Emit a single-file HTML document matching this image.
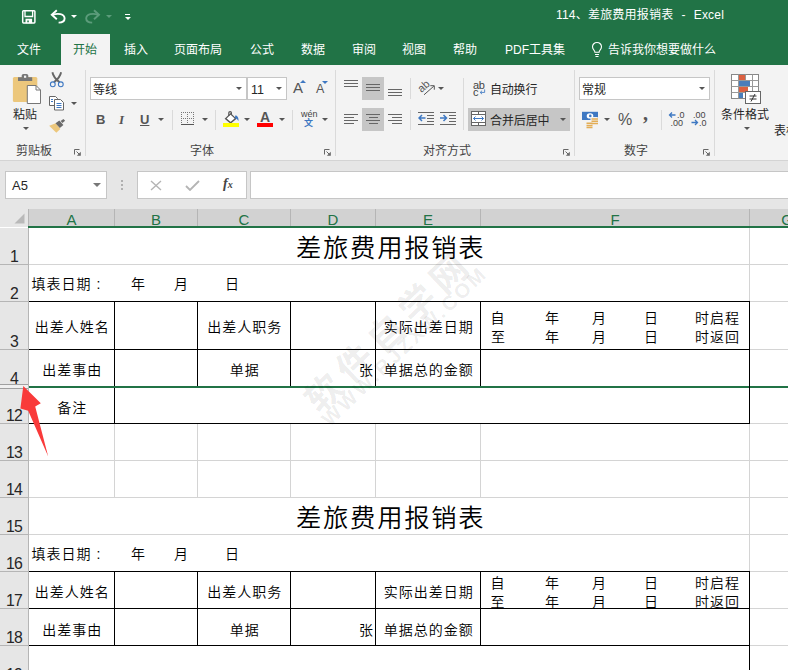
<!DOCTYPE html>
<html lang="zh-CN">
<head>
<meta charset="utf-8">
<title>114、差旅费用报销表 - Excel</title>
<style>
html,body{margin:0;padding:0;}
body{width:788px;height:670px;overflow:hidden;position:relative;background:#fff;
  font-family:"Liberation Sans","Noto Sans CJK SC",sans-serif;color:#262626;}
.abs,#app *{position:absolute;box-sizing:border-box;}
#app{position:absolute;left:0;top:0;width:788px;height:670px;overflow:hidden;}
.t{white-space:nowrap;line-height:1;}
/* title + tabs */
#titlebar{left:0;top:0;width:788px;height:65px;background:#217346;}
.tab{color:#fff;font-size:12px;top:44px;}
#tabactive{left:61px;top:34px;width:49px;height:32px;background:#f3f3f3;}
/* ribbon */
#ribbon{left:0;top:65px;width:788px;height:96px;background:#f3f3f3;border-bottom:1px solid #d4d4d4;}
.rl{font-size:12px;color:#444;top:145px;}
.rt{font-size:12px;color:#262626;}
.vsep{width:1px;background:#dadada;}
.box{background:#fff;border:1px solid #c6c6c6;}
.dd{width:0;height:0;border-left:3px solid transparent;border-right:3px solid transparent;border-top:3px solid #555;}
.sel{background:#c6c6c6;}
/* formula area */
#fbar{left:0;top:161px;width:788px;height:49px;background:#e6e6e6;}
/* grid */
#grid{left:0;top:209px;width:788px;height:461px;background:#fff;}
.ch{top:209px;height:17px;background:#d2d2d2;border-right:1px solid #b5b5b5;color:#217346;font-size:15px;text-align:center;line-height:21px;overflow:hidden}
.rh{left:0;width:29px;background:#e6e6e6;border-bottom:1px solid #b5b5b5;border-right:1px solid #b5b5b5;color:#262626;font-size:15.800px;letter-spacing:-0.750px}
.rh span{left:0;width:28px;text-align:center;bottom:-1px;line-height:16px;}
.gv{width:1px;background:#d4d4d4;}
.gh{height:1px;background:#d4d4d4;}
.bk{background:#000;}
.c{font-size:14px;color:#000;white-space:nowrap;line-height:16px;letter-spacing:1px;font-weight:350}
.cc{text-align:center;padding-left:1.500px;}
.title{font-size:25.300px;color:#000;line-height:30px;white-space:nowrap;letter-spacing:1.750px;font-weight:350}
.wm{color:rgba(0,0,0,0.085);font-weight:bold;white-space:nowrap;transform-origin:0 0;}
</style>
</head>
<body>
<div id="app">
<!-- ===== TITLE BAR ===== -->
<div id="titlebar"></div>
<div style="left:0;top:65px;width:788px;height:1px;background:#8ab39c"></div>
<div id="tabactive"></div>

<!-- QAT icons -->
<svg style="left:20px;top:8px" width="18" height="18" viewBox="20 8 18 18"><rect x="22.700" y="10.700" width="12.200" height="12.200" rx="0.800" fill="none" stroke="#fff" stroke-width="1.500"/><path d="M25 10.500v6h7.600v-6" fill="none" stroke="#fff" stroke-width="1.300"/><path d="M25.500 18.800h6.600v4.500h-6.600z M27.300 20.500v3h1.500v-3z" fill="#fff" fill-rule="evenodd"/></svg>
<svg style="left:48px;top:6px" width="20" height="20" viewBox="48 6 20 20"><path d="M56.800 10.200L51.800 14.800L56.800 19.200" fill="none" stroke="#fff" stroke-width="1.900"/><path d="M52.500 14.800C55 14 58 13.600 60.500 14.200C63 14.800 64.600 16.500 64.600 18.500C64.600 21 62.500 22.500 58.600 22.600" fill="none" stroke="#fff" stroke-width="1.900"/></svg>
<div class="dd" style="left:71px;top:15px;border-top-color:#fff"></div>
<svg style="left:83px;top:6px" width="20" height="20" viewBox="83 6 20 20"><path d="M94 10.200L99 14.800L94 19.200" fill="none" stroke="#5c9c7b" stroke-width="1.900"/><path d="M98.300 14.800C95.800 14 92.800 13.600 90.300 14.200C87.800 14.800 86.200 16.500 86.200 18.500C86.200 21 88.300 22.500 92.200 22.600" fill="none" stroke="#5c9c7b" stroke-width="1.900"/></svg>
<div class="dd" style="left:106px;top:15px;border-top-color:#5c9c7b"></div>
<div style="left:125px;top:14px;width:5px;height:1px;background:#fff"></div>
<div class="dd" style="left:124.500px;top:16.500px;border-top-color:#fff"></div>
<div class="t" style="left:556px;top:9px;font-size:12px;color:#fff;letter-spacing:0.2px">114、差旅费用报销表&nbsp; <span style="position:static;margin-left:1px">-</span>&nbsp; <span style="position:static;margin-left:1px">Excel</span></div>
<!-- tabs -->
<div class="t tab" style="left:17px">文件</div>
<div class="t tab" style="left:73px;color:#217346">开始</div>
<div class="t tab" style="left:124px">插入</div>
<div class="t tab" style="left:174px">页面布局</div>
<div class="t tab" style="left:250px">公式</div>
<div class="t tab" style="left:301px">数据</div>
<div class="t tab" style="left:352px">审阅</div>
<div class="t tab" style="left:402px">视图</div>
<div class="t tab" style="left:453px">帮助</div>
<div class="t tab" style="left:505px">PDF工具集</div>
<svg style="left:590px;top:41px" width="14" height="17" viewBox="0 0 14 17"><path d="M7 1.500c-2.600 0-4.500 1.900-4.500 4.300c0 1.600 0.800 2.600 1.600 3.500c0.500 0.600 0.800 1.200 0.800 2h4.200c0-0.800 0.300-1.400 0.800-2c0.800-0.900 1.600-1.900 1.600-3.500c0-2.400-1.900-4.300-4.500-4.300z M5 13.500h4 M5.500 15.500h3" fill="none" stroke="#fff" stroke-width="1.100"/></svg>
<div class="t tab" style="left:608px">告诉我你想要做什么</div>


<div id="ribbon"></div>
<!-- clipboard group -->
<svg style="left:10px;top:70px" width="34" height="36" viewBox="10 70 34 36">
 <rect x="12.900" y="77" width="24.400" height="25" rx="1.500" fill="#ecc77c"/>
 <path d="M18 81v-3.800h3.700v-1.400c0-1 0.800-1.800 1.800-1.800h3c1 0 1.800 0.800 1.800 1.800v1.400h3.900v3.800z" fill="#767676"/>
 <rect x="24" y="75.600" width="2.200" height="2.200" fill="#f3f3f3"/>
 <path d="M27.300 85.500h8.700l4.500 4.500v13.500h-13.200z" fill="#fff" stroke="#767676" stroke-width="1"/>
 <path d="M36 85.500v4.500h4.500" fill="none" stroke="#767676" stroke-width="1"/>
</svg>
<div class="t rt" style="left:13px;top:109px">粘贴</div>
<div class="dd" style="left:23px;top:127px"></div>
<svg style="left:48px;top:70px" width="18" height="19" viewBox="48 70 18 19">
 <path d="M52.400 72.200c0.600 3 2.500 6.500 7.200 10 M61.100 72.200c-0.600 3-2.500 6.500-7.200 10" stroke="#666" stroke-width="1.900" fill="none"/>
 <circle cx="52.800" cy="84.300" r="2.400" fill="none" stroke="#3e78c2" stroke-width="1.100"/>
 <circle cx="60.800" cy="84.300" r="2.400" fill="none" stroke="#3e78c2" stroke-width="1.100"/>
</svg>
<svg style="left:48px;top:94px" width="18" height="18" viewBox="0 0 18 18">
 <path d="M1.500 2.500h6l2 2v7h-8z" fill="#fff" stroke="#666" stroke-width="1"/>
 <path d="M6.500 5.500h6l3 3v7.500h-9z" fill="#fff" stroke="#666" stroke-width="1"/>
 <path d="M3 5.500h2 M3 7.500h2 M8.500 9.500h5 M8.500 11.500h5 M8.500 13.500h5" stroke="#3e78c2" stroke-width="1"/>
</svg>
<div class="dd" style="left:71px;top:102px"></div>
<svg style="left:48px;top:117px" width="19" height="18" viewBox="48 117 19 18">
 <path d="M49.200 125.700L55.800 123.300L60.300 128.900L56.300 132.800Z" fill="#ecc77c"/>
 <path d="M55.500 123.300L59.300 120.600L63.400 125.100L59.800 128.100Z" fill="#6a6a6a"/>
 <path d="M60.600 121L63.400 119L65.100 120.800L62.400 123Z" fill="#6a6a6a"/>
</svg>
<div class="t rl" style="left:16px">剪贴板</div>
<svg style="left:74px;top:149px" width="7" height="7" viewBox="0 0 7 7"><path d="M0.500 5.500v-5h5 M2.500 2.500l3 3" fill="none" stroke="#666" stroke-width="1"/><path d="M6.800 2.800v4h-4z" fill="#666"/></svg>
<div class="vsep" style="left:85px;top:70px;height:86px"></div>
<!-- font group -->
<div class="box" style="left:90px;top:77px;width:157px;height:23px"></div>
<div class="t rt" style="left:93px;top:84px">等线</div>
<div class="dd" style="left:236px;top:87px"></div>
<div class="box" style="left:247px;top:77px;width:40px;height:23px"></div>
<div class="t rt" style="left:251px;top:84px;font-size:12.500px">11</div>
<div class="dd" style="left:276px;top:87px"></div>
<div class="t" style="left:293px;top:80px;font-size:15px;color:#555">A</div>
<div class="dd" style="left:300px;top:80px;border-top:0;border-bottom:3px solid #3e78c2"></div>
<div class="t" style="left:316px;top:83px;font-size:12.500px;color:#555">A</div>
<div class="dd" style="left:322px;top:81px;border-top-color:#3e78c2"></div>
<div class="t" style="left:96px;top:113px;font-size:13px;font-weight:bold;color:#555">B</div>
<div class="t" style="left:119px;top:113px;font-size:13px;font-style:italic;font-family:'Liberation Serif',serif;font-weight:bold;color:#555">I</div>
<div class="t" style="left:140px;top:113px;font-size:13px;color:#555;font-weight:bold;text-decoration:underline">U</div>
<div class="dd" style="left:158px;top:118px"></div>
<div class="vsep" style="left:172px;top:110px;height:20px"></div>
<svg style="left:180px;top:111px" width="15" height="15" viewBox="0 0 15 15">
 <path d="M1 1.500h13 M1 7.500h13 M1.500 1v13 M7.500 1v13 M13.500 1v13" stroke="#777" stroke-width="1" stroke-dasharray="1 1" fill="none"/>
 <path d="M1 13.500h13" stroke="#555" stroke-width="1"/>
</svg>
<div class="dd" style="left:202px;top:118px"></div>
<div class="vsep" style="left:215px;top:110px;height:20px"></div>
<svg style="left:222px;top:109px" width="19" height="19" viewBox="222 109 19 19">
 <path d="M225.600 118.600L230.600 113.800L235.600 118.600L230.600 122.800Z" fill="#fff" stroke="#555" stroke-width="1.300"/>
 <path d="M228.800 116v-3.300c0-1.300 2.600-1.300 2.600 0v1.600" fill="none" stroke="#555" stroke-width="1.200"/>
 <path d="M235.500 115.200c2.300 0.800 3.600 3 2.800 6c-0.600-1.800-1.600-2.800-3.600-3.300z" fill="#3e78c2"/>
 <rect x="223" y="123" width="16" height="4" fill="#ffff00"/>
</svg>
<div class="dd" style="left:244px;top:118px"></div>
<div class="t" style="left:260px;top:110px;font-size:14px;color:#555;font-weight:bold">A</div>
<div style="left:257px;top:123px;width:16px;height:4px;background:#f00"></div>
<div class="dd" style="left:279px;top:118px"></div>
<div class="vsep" style="left:292px;top:110px;height:20px"></div>
<div class="t" style="left:301px;top:110px;font-size:9px;color:#444">wén</div>
<div class="t" style="left:304px;top:119px;font-size:9px;color:#3e78c2;font-weight:bold">文</div>
<div class="dd" style="left:322px;top:118px"></div>
<div class="t rl" style="left:190px">字体</div>
<svg style="left:324px;top:149px" width="7" height="7" viewBox="0 0 7 7"><path d="M0.500 5.500v-5h5 M2.500 2.500l3 3" fill="none" stroke="#666" stroke-width="1"/><path d="M6.800 2.800v4h-4z" fill="#666"/></svg>
<div class="vsep" style="left:335px;top:70px;height:86px"></div>
<!-- alignment group -->
<div style="left:344px;top:80px;width:14px;height:1px;background:#666"></div><div style="left:344px;top:83px;width:14px;height:1px;background:#666"></div><div style="left:344px;top:86px;width:14px;height:1px;background:#666"></div><div class="sel" style="left:362px;top:77px;width:22px;height:23px"></div><div style="left:366px;top:84px;width:14px;height:1px;background:#666"></div><div style="left:366px;top:87px;width:14px;height:1px;background:#666"></div><div style="left:366px;top:90px;width:14px;height:1px;background:#666"></div><div style="left:388px;top:89px;width:14px;height:1px;background:#666"></div><div style="left:388px;top:92px;width:14px;height:1px;background:#666"></div><div style="left:388px;top:95px;width:14px;height:1px;background:#666"></div><div class="vsep" style="left:410px;top:78px;height:21px"></div><svg style="left:414px;top:76px" width="24" height="22" viewBox="414 76 24 22">
 <text x="417.500" y="90" font-size="11" fill="#555" transform="rotate(-42 423.500 86.500)" font-family="Liberation Sans, sans-serif">ab</text>
 <path d="M424 94.800L433.800 86.200 M430.300 85.700h4v4" fill="none" stroke="#555" stroke-width="1"/>
</svg>
<div class="dd" style="left:437.500px;top:87px"></div>
<div class="vsep" style="left:463px;top:78px;height:52px"></div>
<div class="t" style="left:473px;top:80px;font-size:11px;color:#444;letter-spacing:-0.300px">ab</div>
<div class="t" style="left:473px;top:87px;font-size:11px;color:#444">c</div>
<svg style="left:479px;top:89px" width="7" height="6" viewBox="0 0 8 7"><path d="M6.500 0.500v3.500h-5 M3.500 2l-2.200 2l2.200 2" fill="none" stroke="#3e78c2" stroke-width="1"/></svg>
<div class="t rt" style="left:490px;top:84px;letter-spacing:-0.200px">自动换行</div>
<div style="left:344px;top:114px;width:14px;height:1px;background:#666"></div><div style="left:344px;top:117px;width:10px;height:1px;background:#666"></div><div style="left:344px;top:120px;width:14px;height:1px;background:#666"></div><div style="left:344px;top:123px;width:10px;height:1px;background:#666"></div><div class="sel" style="left:362px;top:108px;width:22px;height:23px"></div><div style="left:366px;top:114px;width:14px;height:1px;background:#666"></div><div style="left:368.5px;top:117px;width:9px;height:1px;background:#666"></div><div style="left:366px;top:120px;width:14px;height:1px;background:#666"></div><div style="left:368.5px;top:123px;width:9px;height:1px;background:#666"></div><div style="left:388px;top:114px;width:14px;height:1px;background:#666"></div><div style="left:392px;top:117px;width:10px;height:1px;background:#666"></div><div style="left:388px;top:120px;width:14px;height:1px;background:#666"></div><div style="left:392px;top:123px;width:10px;height:1px;background:#666"></div><div class="vsep" style="left:410px;top:110px;height:20px"></div><svg style="left:418px;top:111px" width="17" height="15" viewBox="0 0 17 15"><path d="M0 1.500h16 M9 4.500h7 M9 7.500h7 M9 10.500h7 M0 13.500h16" stroke="#666" stroke-width="1" fill="none"/><path d="M1 7h6.500 M4 4l-3 3l3 3" stroke="#3e78c2" stroke-width="1.500" fill="none"/></svg><svg style="left:440px;top:111px" width="17" height="15" viewBox="0 0 17 15"><path d="M0 1.500h16 M9 4.500h7 M9 7.500h7 M9 10.500h7 M0 13.500h16" stroke="#666" stroke-width="1" fill="none"/><path d="M0 7h6.500 M3.500 4l3 3l-3 3" stroke="#3e78c2" stroke-width="1.500" fill="none"/></svg>
<div class="sel" style="left:468px;top:108px;width:102px;height:23px"></div>
<svg style="left:471px;top:111px" width="16" height="15" viewBox="0 0 16 15">
 <rect x="0.500" y="0.500" width="14" height="14" fill="#fff" stroke="#666"/>
 <path d="M0.500 3.500h14 M0.500 11.500h14 M7.500 0.500v3 M7.500 11.500v3" stroke="#666" fill="none"/>
 <path d="M2.500 7.500h10 M4.500 5.500l-2 2l2 2 M10.500 5.500l2 2l-2 2" stroke="#3e78c2" fill="none"/>
</svg>
<div class="t rt" style="left:490px;top:115px;letter-spacing:-0.100px">合并后居中</div>
<div class="dd" style="left:560px;top:118px"></div>
<div class="t rl" style="left:423px">对齐方式</div>
<svg style="left:563px;top:149px" width="7" height="7" viewBox="0 0 7 7"><path d="M0.500 5.500v-5h5 M2.500 2.500l3 3" fill="none" stroke="#666" stroke-width="1"/><path d="M6.800 2.800v4h-4z" fill="#666"/></svg>
<div class="vsep" style="left:574px;top:70px;height:86px"></div>
<!-- number group -->
<div class="box" style="left:579px;top:77px;width:131px;height:23px"></div>
<div class="t rt" style="left:582px;top:84px">常规</div>
<div class="dd" style="left:699px;top:87px"></div>
<svg style="left:580px;top:109px" width="22" height="20" viewBox="580 109 22 20">
 <rect x="582" y="111.800" width="16" height="8.200" fill="#3e78c2"/>
 <ellipse cx="590" cy="115.900" rx="3.300" ry="2.700" fill="#fff"/>
 <circle cx="590.300" cy="115.900" r="1.300" fill="#3e78c2"/>
 <rect x="590.500" y="117" width="8" height="7.600" rx="1.500" fill="#f3f3f3"/>
 <path d="M591.500 119h6.500 M591.500 121.300h6.500 M591.500 123.500h6.500 M586.500 123.300h6 M586.500 125.500h6 M586.500 127.500h6" stroke="#e3ad55" stroke-width="1.500" fill="none"/>
</svg>
<div class="dd" style="left:604px;top:118px"></div>
<div class="t" style="left:618px;top:112px;font-size:16px;color:#555">%</div>
<div class="t" style="left:643px;top:103px;font-size:20px;color:#555;font-weight:bold;font-family:'Liberation Serif',serif">,</div>
<div class="vsep" style="left:661px;top:110px;height:20px"></div>
<svg style="left:668px;top:110px" width="17" height="17" viewBox="0 0 17 17">
 <path d="M1.500 5h6 M4 2.500l-2.500 2.500l2.500 2.500" stroke="#3e78c2" stroke-width="1.300" fill="none"/>
 <text x="9" y="8" font-size="9" fill="#444" font-family="Liberation Sans, sans-serif">.0</text>
 <text x="2.500" y="15.500" font-size="9" fill="#444" font-family="Liberation Sans, sans-serif">.00</text>
</svg>
<svg style="left:690px;top:110px" width="17" height="17" viewBox="0 0 17 17">
 <text x="3" y="8" font-size="9" fill="#444" font-family="Liberation Sans, sans-serif">.00</text>
 <path d="M1.500 12.500h6 M5 10l2.500 2.500l-2.500 2.500" stroke="#3e78c2" stroke-width="1.300" fill="none"/>
 <text x="9" y="15.500" font-size="9" fill="#444" font-family="Liberation Sans, sans-serif">.0</text>
</svg>
<div class="t rl" style="left:624px">数字</div>
<svg style="left:703px;top:149px" width="7" height="7" viewBox="0 0 7 7"><path d="M0.500 5.500v-5h5 M2.500 2.500l3 3" fill="none" stroke="#666" stroke-width="1"/><path d="M6.800 2.800v4h-4z" fill="#666"/></svg>
<div class="vsep" style="left:714px;top:70px;height:86px"></div>
<!-- styles -->
<svg style="left:730px;top:73px" width="32" height="32" viewBox="0 0 32 32">
 <rect x="1.500" y="1.500" width="27" height="24" fill="#fff" stroke="#888"/>
 <path d="M1.500 7.500h27 M1.500 13.500h27 M1.500 19.500h27 M8.500 1.500v24 M15.500 1.500v24 M22.500 1.500v24" stroke="#999" fill="none"/>
 <rect x="9" y="2" width="6" height="5" fill="#dc6141"/>
 <rect x="9" y="8" width="11" height="5" fill="#4a7ebb"/>
 <rect x="9" y="14" width="9" height="5" fill="#dc6141"/>
 <rect x="9" y="20" width="4" height="5" fill="#4a7ebb"/>
 <rect x="15.500" y="18.500" width="15" height="12" fill="#fff" stroke="#666"/>
 <path d="M19.500 23h7 M19.500 26h7 M25 21l-4 7.500" stroke="#333" fill="none"/>
</svg>
<div class="t rt" style="left:721px;top:109px">条件格式</div>
<div class="dd" style="left:744px;top:127px"></div>
<div class="t rt" style="left:774px;top:125px">表格</div>


<div id="fbar"></div>
<div class="box" style="left:5px;top:171px;width:102px;height:28px"></div>
<div class="t" style="left:12px;top:179px;font-size:13px;color:#262626">A5</div>
<div class="dd" style="left:93px;top:183px;border-left-width:4px;border-right-width:4px;border-top-width:4px;border-top-color:#777"></div>
<div style="left:121px;top:180px;width:2px;height:2px;background:#b0b0b0"></div>
<div style="left:121px;top:184px;width:2px;height:2px;background:#b0b0b0"></div>
<div style="left:121px;top:188px;width:2px;height:2px;background:#b0b0b0"></div>
<div class="box" style="left:137px;top:171px;width:110px;height:28px"></div>
<svg style="left:150px;top:180px" width="12" height="11" viewBox="0 0 12 11"><path d="M1 1l10 9 M11 1l-10 9" stroke="#b4b4b4" stroke-width="1.400" fill="none"/></svg>
<svg style="left:185px;top:180px" width="15" height="11" viewBox="0 0 15 11"><path d="M1 6l4 4l9-9" stroke="#b4b4b4" stroke-width="1.800" fill="none"/></svg>
<div class="t" style="left:223px;top:177px;font-size:14px;color:#444;font-style:italic;font-family:'Liberation Serif',serif;font-weight:bold">f<span style="position:static;font-size:10px">x</span></div>
<div class="box" style="left:250px;top:171px;width:545px;height:28px"></div>

<div id="grid"></div>
<div style="left:0;top:209px;width:29px;height:18px;background:#e6e6e6;border-right:1px solid #b5b5b5"></div>
<svg style="left:14px;top:213px" width="11" height="11" viewBox="0 0 11 11"><path d="M10.500 0.500v10h-10z" fill="#b9b9b9"/></svg>
<div class="ch" style="left:29px;width:86px">A</div>
<div class="ch" style="left:115px;width:83px">B</div>
<div class="ch" style="left:198px;width:93px">C</div>
<div class="ch" style="left:291px;width:85px">D</div>
<div class="ch" style="left:376px;width:105px">E</div>
<div class="ch" style="left:481px;width:269px">F</div>
<div class="ch" style="left:750px;width:75px">G</div>
<div style="left:28px;top:226px;width:760px;height:2px;background:#217346"></div>
<div class="rh" style="top:228px;height:37px"><span>1</span></div>
<div class="rh" style="top:265px;height:37px"><span>2</span></div>
<div class="rh" style="top:302px;height:48px"><span>3</span></div>
<div class="rh" style="top:350px;height:37px"><span>4</span></div>
<div class="rh" style="top:387px;height:37px"><span>12</span></div>
<div class="rh" style="top:424px;height:37px"><span>13</span></div>
<div class="rh" style="top:461px;height:37px"><span>14</span></div>
<div class="rh" style="top:498px;height:37px"><span>15</span></div>
<div class="rh" style="top:535px;height:37px"><span>16</span></div>
<div class="rh" style="top:572px;height:37px"><span>17</span></div>
<div class="rh" style="top:609px;height:37px"><span>18</span></div>
<div class="rh" style="top:646px;height:37px"><span>19</span></div>
<div class="gh" style="left:29px;top:264px;width:760px;height:1px"></div>
<div class="gh" style="left:29px;top:301px;width:760px;height:1px"></div>
<div class="gh" style="left:29px;top:349px;width:760px;height:1px"></div>
<div class="gh" style="left:29px;top:386px;width:760px;height:1px"></div>
<div class="gh" style="left:29px;top:423px;width:760px;height:1px"></div>
<div class="gh" style="left:29px;top:460px;width:760px;height:1px"></div>
<div class="gh" style="left:29px;top:497px;width:760px;height:1px"></div>
<div class="gh" style="left:29px;top:534px;width:760px;height:1px"></div>
<div class="gh" style="left:29px;top:571px;width:760px;height:1px"></div>
<div class="gh" style="left:29px;top:608px;width:760px;height:1px"></div>
<div class="gh" style="left:29px;top:645px;width:760px;height:1px"></div>
<div class="gv" style="left:749px;top:228px;width:1px;height:442px"></div>
<div class="gv" style="left:114px;top:423px;width:1px;height:74px"></div>
<div class="gv" style="left:197px;top:423px;width:1px;height:74px"></div>
<div class="gv" style="left:290px;top:423px;width:1px;height:74px"></div>
<div class="gv" style="left:375px;top:423px;width:1px;height:74px"></div>
<div class="gv" style="left:480px;top:423px;width:1px;height:74px"></div>
<div class="gh bk" style="left:29px;top:301px;width:721px;height:1px"></div>
<div class="gh bk" style="left:29px;top:349px;width:721px;height:1px"></div>
<div class="gh bk" style="left:29px;top:386px;width:721px;height:1px"></div>
<div class="gv bk" style="left:114px;top:301px;width:1px;height:85px"></div>
<div class="gv bk" style="left:197px;top:301px;width:1px;height:85px"></div>
<div class="gv bk" style="left:290px;top:301px;width:1px;height:85px"></div>
<div class="gv bk" style="left:375px;top:301px;width:1px;height:85px"></div>
<div class="gv bk" style="left:480px;top:301px;width:1px;height:85px"></div>
<div class="gv bk" style="left:749px;top:301px;width:1px;height:123px"></div>
<div class="gh bk" style="left:29px;top:423px;width:721px;height:1px"></div>
<div class="gv bk" style="left:114px;top:386px;width:1px;height:37px"></div>
<div class="gh bk" style="left:29px;top:571px;width:721px;height:1px"></div>
<div class="gh bk" style="left:29px;top:608px;width:721px;height:1px"></div>
<div class="gh bk" style="left:29px;top:645px;width:721px;height:1px"></div>
<div class="gv bk" style="left:114px;top:571px;width:1px;height:74px"></div>
<div class="gv bk" style="left:197px;top:571px;width:1px;height:74px"></div>
<div class="gv bk" style="left:290px;top:571px;width:1px;height:74px"></div>
<div class="gv bk" style="left:375px;top:571px;width:1px;height:74px"></div>
<div class="gv bk" style="left:480px;top:571px;width:1px;height:74px"></div>
<div class="gv bk" style="left:749px;top:571px;width:1px;height:75px"></div>
<div class="gv bk" style="left:749px;top:645px;width:1px;height:30px"></div>
<div style="left:29px;top:386px;width:759px;height:2px;background:#217346"></div>
<div style="left:0px;top:384px;width:28px;height:5px;background:#f0f0f0;border-top:1px solid #a0a0a0;border-bottom:1px solid #a0a0a0"></div>
<div class="title" style="left:296px;top:233px">差旅费用报销表</div>
<div class="c" style="left:31.500px;top:276px;">填表日期 :</div>
<div class="c" style="left:131px;top:276px;">年</div>
<div class="c" style="left:174px;top:276px;">月</div>
<div class="c" style="left:225px;top:276px;">日</div>
<div class="c cc" style="left:29px;width:85px;top:318.5px">出差人姓名</div>
<div class="c cc" style="left:198px;width:92px;top:318.5px">出差人职务</div>
<div class="c cc" style="left:376px;width:104px;top:318.5px">实际出差日期</div>
<div class="c" style="left:490.500px;top:310px;">自</div>
<div class="c" style="left:545px;top:310px;">年</div>
<div class="c" style="left:592px;top:310px;">月</div>
<div class="c" style="left:644px;top:310px;">日</div>
<div class="c" style="left:695px;top:310px;">时启程</div>
<div class="c" style="left:491px;top:328.5px;">至</div>
<div class="c" style="left:545px;top:328.5px;">年</div>
<div class="c" style="left:592px;top:328.5px;">月</div>
<div class="c" style="left:644px;top:328.5px;">日</div>
<div class="c" style="left:695px;top:328.5px;">时返回</div>
<div class="c cc" style="left:29px;width:85px;top:362px">出差事由</div>
<div class="c cc" style="left:198px;width:92px;top:362px">单据</div>
<div class="c" style="left:359px;top:362px;">张</div>
<div class="c cc" style="left:376px;width:104px;top:362px">单据总的金额</div>
<div class="c cc" style="left:29px;width:85px;top:400px">备注</div>
<div class="title" style="left:296px;top:503px">差旅费用报销表</div>
<div class="c" style="left:31.500px;top:546px;">填表日期 :</div>
<div class="c" style="left:131px;top:546px;">年</div>
<div class="c" style="left:174px;top:546px;">月</div>
<div class="c" style="left:225px;top:546px;">日</div>
<div class="c cc" style="left:29px;width:85px;top:584px">出差人姓名</div>
<div class="c cc" style="left:198px;width:92px;top:584px">出差人职务</div>
<div class="c cc" style="left:376px;width:104px;top:584px">实际出差日期</div>
<div class="c" style="left:490.500px;top:575px;">自</div>
<div class="c" style="left:545px;top:575px;">年</div>
<div class="c" style="left:592px;top:575px;">月</div>
<div class="c" style="left:644px;top:575px;">日</div>
<div class="c" style="left:695px;top:575px;">时启程</div>
<div class="c" style="left:490.500px;top:594px;height:14px;overflow:hidden">至</div>
<div class="c" style="left:545px;top:594px;height:14px;overflow:hidden">年</div>
<div class="c" style="left:592px;top:594px;height:14px;overflow:hidden">月</div>
<div class="c" style="left:644px;top:594px;height:14px;overflow:hidden">日</div>
<div class="c" style="left:695px;top:594px;height:14px;overflow:hidden">时返回</div>
<div class="c cc" style="left:29px;width:85px;top:622px">出差事由</div>
<div class="c cc" style="left:198px;width:92px;top:622px">单据</div>
<div class="c" style="left:359px;top:622px;">张</div>
<div class="c cc" style="left:376px;width:104px;top:622px">单据总的金额</div>

<div class="gv bk" style="left:749px;top:386px;width:1px;height:2px"></div>
<!-- watermark -->
<div class="wm" style="left:299px;top:393px;font-size:36px;letter-spacing:7.200px;transform:rotate(-43.600deg);line-height:36px">软件自学网</div>
<div class="wm" style="left:318px;top:414.500px;font-size:20px;letter-spacing:2.950px;transform:rotate(-43.800deg);line-height:20px">WWW.RJZXW.COM</div>
<!-- red arrow -->
<svg style="left:0;top:380px" width="60" height="85" viewBox="0 380 60 85"><path d="M23.300 386 L40.800 403.300 L35.200 406.500 L48.200 456.500 L28.200 410.700 L20.400 408.500 Z" fill="#f93a3a"/></svg>

</div>
</body>
</html>
